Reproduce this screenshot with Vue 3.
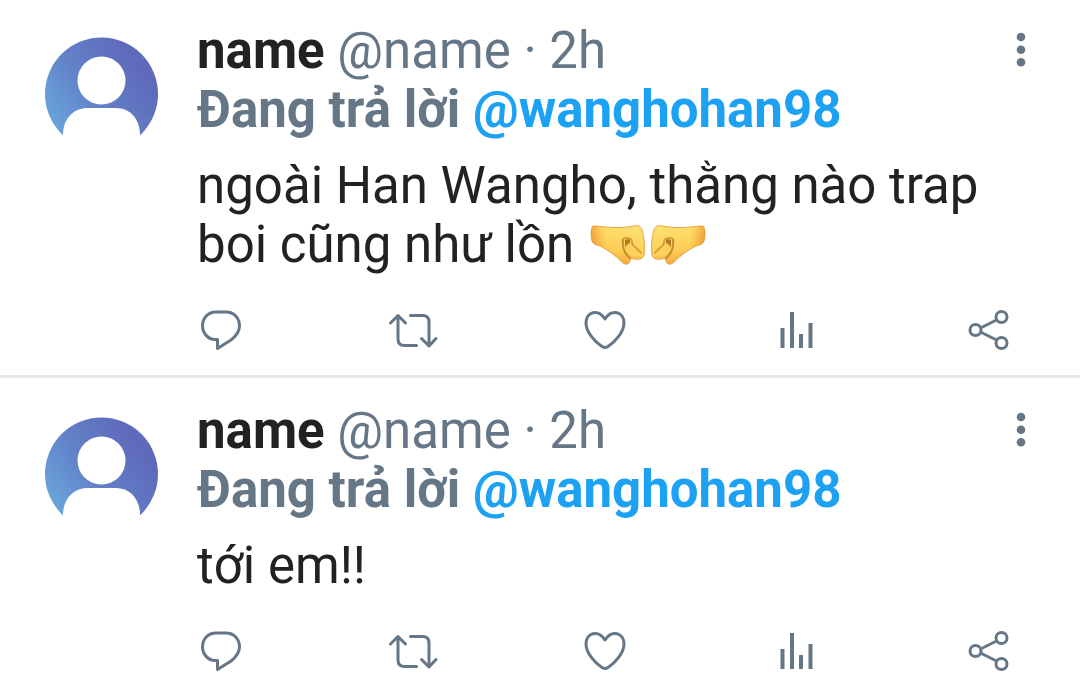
<script setup>
const tweets = [
  { id: 1, text: 'ngoài Han Wangho, thằng nào trap boi cũng như lồn', fists: true },
  { id: 2, text: 'tới em!!', fists: false },
]
</script>

<template>
  <main class="feed">
    <svg class="defs" aria-hidden="true">
      <defs>
        <linearGradient id="avatar-fill" x1="0" y1="0.75" x2="0.8" y2="0.2">
          <stop offset="0" stop-color="#69a8dc" />
          <stop offset="0.5" stop-color="#6281c8" />
          <stop offset="1" stop-color="#5f6aba" />
        </linearGradient>
        <linearGradient id="fist-fill" x1="0.6" y1="0" x2="0.35" y2="1">
          <stop offset="0" stop-color="#fee070" />
          <stop offset="0.6" stop-color="#fdcf58" />
          <stop offset="1" stop-color="#f3a238" />
        </linearGradient>
        <linearGradient id="wrist-fill" x1="0" y1="0.4" x2="1" y2="0.3">
          <stop offset="0" stop-color="#ea8f2c" stop-opacity="0.8" />
          <stop offset="0.3" stop-color="#f5ac3a" stop-opacity="0" />
        </linearGradient>
        <g id="fist">
          <path d="M2 3Q0 10 2 17C3 20 6 21 10 22C18 26 25 31 32 38C35 41 39 41 40 37L41 34C46 36 53 36 54 31C55 23 54 12 52 6C51 2 48 1 43 2C31 5 16 3 5 2Q3 2 2 3Z" fill="url(#fist-fill)" stroke="#e2a545" />
          <path d="M2 3Q0 10 2 17C3 20 6 21 10 22C18 26 25 31 32 38C35 41 39 41 40 37L41 34C46 36 53 36 54 31C55 23 54 12 52 6C51 2 48 1 43 2C31 5 16 3 5 2Q3 2 2 3Z" fill="url(#wrist-fill)" />
          <path d="M34 15C39 14 42 16 43 20C44 24 51 26 52 30C47 34 37 32 35 25Z" fill="#fcd05a" />
          <path d="M32 16C36 12 43 14 42 19C43 23 49 25 51 29" fill="none" stroke="#cf9434" stroke-width="1.500" stroke-linecap="round" />
          <path d="M33 16C32 24 35 30 40 34" fill="none" stroke="#c98d30" stroke-width="2" stroke-linecap="round" />
          <path d="M35 16Q38 14 40 16Q41 19 38 20Q35 22 35 24Z" fill="#b57c24" />
        </g>
      </defs>
    </svg>

    <article v-for="tweet in tweets" :key="tweet.id" class="tweet">
      <svg class="avatar" viewBox="0 0 114 114" role="img" aria-label="name">
        <circle cx="56.500" cy="57" r="56.500" fill="url(#avatar-fill)" />
        <circle cx="56.500" cy="43.500" r="24" fill="#fff" />
        <path d="M18 114V98C18 81 29 71 43 71H71C85 71 95 82 95 98V114Z" fill="#fff" />
      </svg>

      <div class="content">
        <header class="heading">
          <div class="author"><strong>name</strong> @name · 2h</div>
          <button class="menu" type="button" aria-label="Menu">
            <svg viewBox="0 0 10 36">
              <g fill="#657786">
                <circle cx="5" cy="5" r="4.300" />
                <circle cx="5" cy="17.700" r="4.300" />
                <circle cx="5" cy="30.300" r="4.300" />
              </g>
            </svg>
          </button>
        </header>
        <div class="reply">Đang trả lời <a href="#">@wanghohan98</a></div>

        <p class="text">
          {{ tweet.text }}
          <span v-if="tweet.fists" class="fists"><svg viewBox="-3 3 60 44" role="img" aria-label="🤜"><use href="#fist" /></svg><svg viewBox="-3 3 60 44" role="img" aria-label="🤛"><use href="#fist" transform="translate(56 0) scale(-1 1)" /></svg></span>
        </p>

        <footer class="actions">
          <button type="button" aria-label="Reply">
            <svg viewBox="0 0 48 44">
              <path d="M19 4H29C37 4 42.500 10 42.500 18C42.500 24 39 28 34 32L20.500 40.500V31.500H18C11 31.500 5.500 25 5.500 18C5.500 10 11 4 19 4Z" />
            </svg>
          </button>
          <button type="button" aria-label="Retweet">
            <svg viewBox="0 0 48 44">
              <path d="M1.500 15L9 7.500L16.500 15M9 8V31Q9 37.500 15.500 37.500H27.500M21.500 7.500H33.500Q40 7.500 40 14V37M32.500 30.500L40 38L47 30.500" stroke-linecap="round" />
            </svg>
          </button>
          <button type="button" aria-label="Like">
            <svg viewBox="0 0 48 44">
              <path d="M24 11C17 0 5 4 5 15C5 24 14 34 21 38.500Q24 40.500 27 38.500C34 34 43 24 43 15C43 4 31 0 24 11Z" />
            </svg>
          </button>
          <button type="button" aria-label="Analytics">
            <svg viewBox="0 0 48 44">
              <path d="M9.500 20V40M19 4V40M28 26V40M37.500 15V40" stroke-width="4" />
            </svg>
          </button>
          <button type="button" aria-label="Share">
            <svg viewBox="0 0 48 44">
              <path d="M16.500 19.500L31.500 12M16.500 24.500L31.500 32" />
              <circle cx="10.500" cy="22" r="5.500" />
              <circle cx="36.500" cy="9" r="5.500" />
              <circle cx="36.500" cy="35" r="5.500" />
            </svg>
          </button>
        </footer>
      </div>
    </article>
  </main>
</template>

<style>
body {
  margin: 0;
  background: #fff;
}
</style>

<style scoped>
.feed {
  color: #222;
  font: 51px/59px Roboto, "Noto Sans", sans-serif;
  overflow: hidden;
}

.defs {
  position: absolute;
  width: 0;
  height: 0;
}

.tweet {
  display: flex;
  gap: 38px;
  padding: 23px 56px 23px 45px;
  border-bottom: 3px solid #e9e9e9;
}

.tweet:first-of-type {
  padding-top: 21px;
}

.tweet:last-of-type {
  padding-bottom: 12px;
  border-bottom: 0;
}

.avatar {
  flex: none;
  width: 114px;
  height: 114px;
  margin-top: 16px;
}

.content {
  flex: 1;
  min-width: 0;
}

.heading {
  display: flex;
  justify-content: space-between;
}

.author {
  color: #657786;
}

.author strong {
  color: #222;
}

button {
  padding: 0;
  border: 0;
  background: none;
  cursor: pointer;
}

.menu {
  height: 36px;
  margin-top: 11px;
  margin-right: -2px;
}

.menu svg {
  display: block;
  width: 10px;
  height: 36px;
}

.reply {
  color: #657786;
  font-weight: 700;
}

.reply a {
  color: #1da1f2;
  text-decoration: none;
}

.text {
  margin: 17px 11px 0 0;
}

.fists {
  display: inline-flex;
  height: 44px;
  vertical-align: middle;
}

.fists svg {
  width: 60px;
  height: 44px;
  overflow: visible;
}

.actions {
  display: flex;
  justify-content: space-between;
  margin: 34px 11px 0 0;
}

.actions svg {
  display: block;
  width: 48px;
  height: 44px;
  overflow: visible;
  fill: none;
  stroke: #657786;
  stroke-width: 3;
  stroke-linejoin: round;
}
</style>
